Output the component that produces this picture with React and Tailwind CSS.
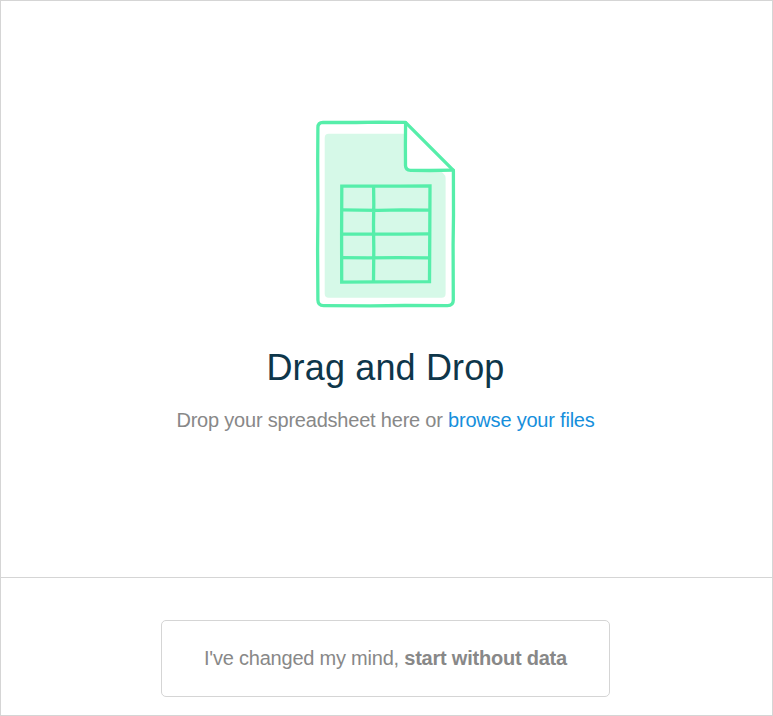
function SpreadsheetIcon() {
  return (
    <svg className="block h-[190px] w-[144px]" viewBox="314 119 144 190" fill="none" aria-hidden="true">
      <path d="M328.700 133.800H405V166Q405 171 410 171H438Q441 171 443 173Q445.600 175.500 445.600 178V293.700Q445.600 297.700 441.600 297.700H328.700Q324.700 297.700 324.700 293.700V137.800Q324.700 133.800 328.700 133.800Z" fill="#d6f9e8" />
      <g stroke="#56eeaa" strokeWidth="3.3" strokeLinejoin="round" strokeLinecap="round">
        <path d="M405.500 122.400L380 122.100L356 122.500L323 122.400Q317.900 122.500 317.900 127.500L317.700 160L317.900 210L317.600 250L317.900 300Q318 305.600 323.500 305.600L370 305.800L405 305.500L447.500 305.600Q453.300 305.600 453.300 300L453.100 245L453.500 215L453.400 170.400Z" />
        <path d="M405.600 122.600L405.400 145L405.500 165.500Q405.600 170.200 410.500 170.300L430 170.500L453.300 170.200" />
        <path d="M341.800 186.100L400 186.200L430 185.900L429.800 230L429.500 281.700L380 281.900L341.700 282.100L341.600 235Z" strokeLinejoin="miter" />
        <path d="M373.600 186.500L373.800 204L373.500 225L373.800 250L373.500 281.500M341.800 209.900L378 210.300L402 209.900L429 210.100M341.800 234.100L374 233.900L400 234.200L429 233.900M341.800 257.700L368 257.900L398 257.700L429 257.900" strokeLinecap="butt" />
      </g>
    </svg>
  );
}

export default function App() {
  return (
    <main className="flex h-[716px] w-[773px] flex-col border border-[#d5d5d5] bg-white font-['Liberation_Sans',Arial,sans-serif]">
      <section className="flex h-[577px] flex-col items-center border-b border-[#d5d5d5] pt-[118px] pr-px">
        <SpreadsheetIcon />
        <h1 className="mt-[35px] mr-px text-4xl leading-[48px] tracking-[0.15px] text-[#0e364a]">Drag and Drop</h1>
        <p className="mt-[14px] mr-px text-xl leading-[28px] tracking-[-0.21px] text-[#888888]">
          Drop your spreadsheet here or{' '}
          <a href="#" className="text-[#168fdc]">browse your files</a>
        </p>
      </section>
      <section className="flex flex-1 items-start justify-center pt-[42px] pr-[2px]">
        <button className="h-[77px] w-[449px] rounded-[5px] border border-[#d5d5d5] pb-[2px] text-xl tracking-[-0.22px] text-[#888888]">
          I've changed my mind, <strong className="font-bold">start without data</strong>
        </button>
      </section>
    </main>
  );
}
